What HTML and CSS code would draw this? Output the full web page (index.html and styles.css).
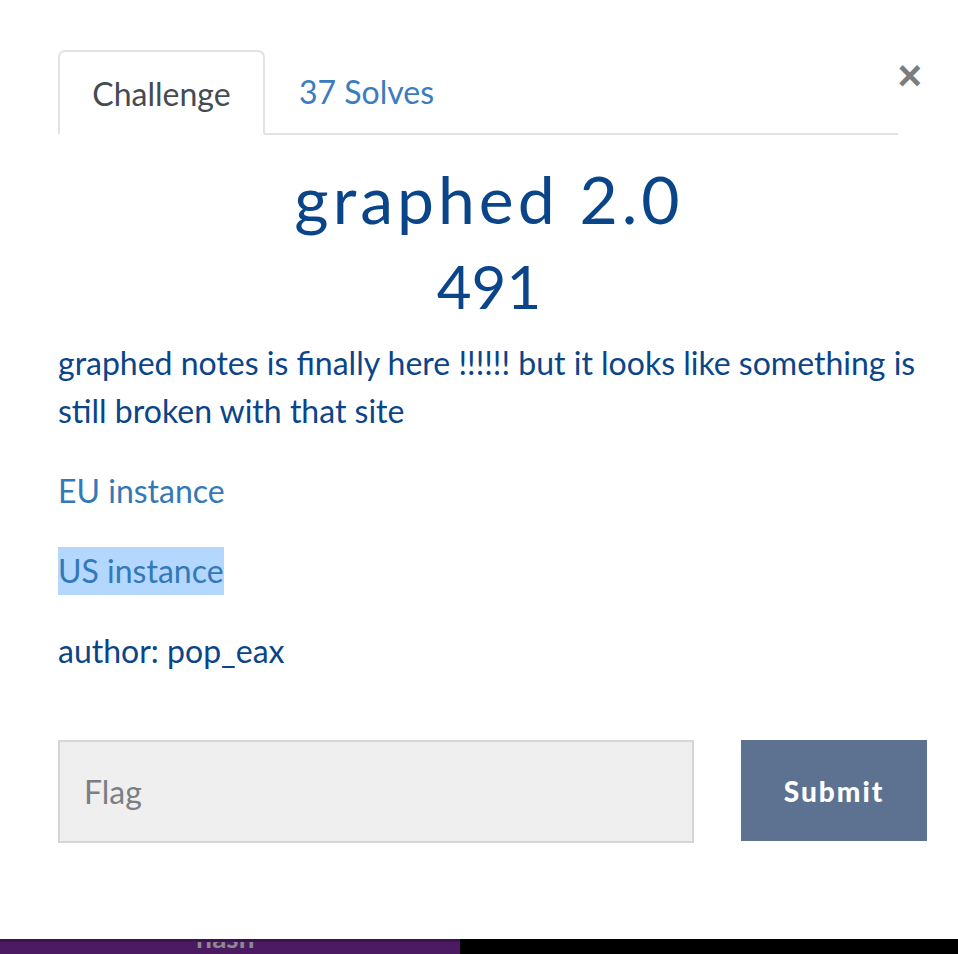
FILE: index.html
```html
<!DOCTYPE html>
<html>
<head>
<meta charset="utf-8">
<link rel="stylesheet" href="styles.css">
</head>
<body>
<div class="modal">
  <div class="modal-head">
    <ul class="tabs">
      <li class="tab active">Challenge</li>
      <li class="tab link">37 Solves</li>
    </ul>
    <button class="close" aria-label="Close">&times;</button>
  </div>
  <div class="modal-body">
    <h1 class="title">graphed 2.0</h1>
    <h2 class="points">491</h2>
    <p class="desc">graphed notes is finally here !!!!!! but it looks like something is still broken with that site</p>
    <p class="para"><a class="lnk">EU instance</a></p>
    <p class="para"><a class="lnk selected">US instance</a></p>
    <p class="para author">author: pop_eax</p>
    <div class="form-row">
      <div class="flag-input">Flag</div>
      <button class="submit">Submit</button>
    </div>
  </div>
</div>
<div class="footer-strip">
  <div class="purple"><span class="ghost">flash</span></div>
  <div class="black"></div>
</div>
</body>
</html>
```

FILE: styles.css
```css
html, body {
  margin: 0;
  padding: 0;
  background: #fff;
  width: 958px;
  height: 954px;
  overflow: hidden;
  font-family: "Lato", "Liberation Sans", sans-serif;
}

.modal {
  height: 939px;
  padding: 0 0 0 58px;
  box-sizing: border-box;
}

.modal-head {
  display: flex;
  align-items: flex-start;
  padding-top: 50px;
  width: 840px;
  position: relative;
}

.tabs {
  list-style: none;
  margin: 0;
  padding: 0;
  display: flex;
  flex: 1;
  border-bottom: 2px solid #dfe3e8;
  height: 83px;
}

.tab {
  font-size: 32px;
  line-height: 83px;
  box-sizing: border-box;
  height: 85px;
}

.tab.active {
  color: #444b53;
  border: 2px solid #dfe3e8;
  border-bottom-color: #fff;
  border-radius: 7px 7px 0 0;
  width: 207px;
  text-align: center;
  background: #fff;
}

.tab.link {
  color: #3a7cbe;
  padding-left: 34px;
}

.close {
  position: absolute;
  right: -24px;
  top: 56px;
  border: 0;
  background: none;
  padding: 0;
  font-family: "Liberation Sans", sans-serif;
  font-weight: bold;
  font-size: 42px;
  line-height: 40px;
  color: #7d7d7d;
}

.modal-body {
  width: 880px;
  color: #0b4589;
}

.title {
  margin: 28px 0 0;
  text-align: center;
  font-family: "Lato", sans-serif;
  font-weight: 400;
  font-size: 66px;
  letter-spacing: 4px;
  line-height: 72px;
  color: #0b4589;
  width: 862px;
}

.points {
  margin: 18px 0 0;
  text-align: center;
  font-weight: 400;
  font-size: 60px;
  line-height: 66px;
  color: #0b4589;
  width: 862px;
}

.desc {
  margin: 20px 0 0;
  font-size: 32px;
  line-height: 48px;
  width: 870px;
}

.para {
  margin: 32px 0 0;
  font-size: 32px;
  line-height: 48px;
}

.lnk {
  color: #3479b7;
  display: inline-block;
}

.selected {
  background: #b3d7fe;
}

.author {
  color: #0b4589;
}

.form-row {
  display: flex;
  margin-top: 65px;
  gap: 47px;
  align-items: flex-start;
}

.flag-input {
  flex: none;
  width: 636px;
  height: 103px;
  box-sizing: border-box;
  background: #efefef;
  border: 2px solid #d3d6da;
  color: #7b7f84;
  font-size: 32px;
  line-height: 99px;
  padding-left: 24px;
}

.submit {
  flex: none;
  width: 186px;
  height: 101px;
  border: 0;
  background: #5d7290;
  color: #fff;
  font-family: "Lato", sans-serif;
  font-weight: 900;
  font-size: 28px;
  letter-spacing: 2px;
}

.footer-strip {
  display: flex;
  height: 15px;
}

.purple {
  width: 460px;
  background: #4b1a62;
  border-top: 3px solid #3e1352;
  box-sizing: border-box;
  position: relative;
  overflow: hidden;
}

.ghost {
  position: absolute;
  left: 195px;
  top: -22px;
  font-weight: 700;
  font-size: 28px;
  color: #8b8a8e;
}

.black {
  flex: 1;
  background: #000;
}
```
